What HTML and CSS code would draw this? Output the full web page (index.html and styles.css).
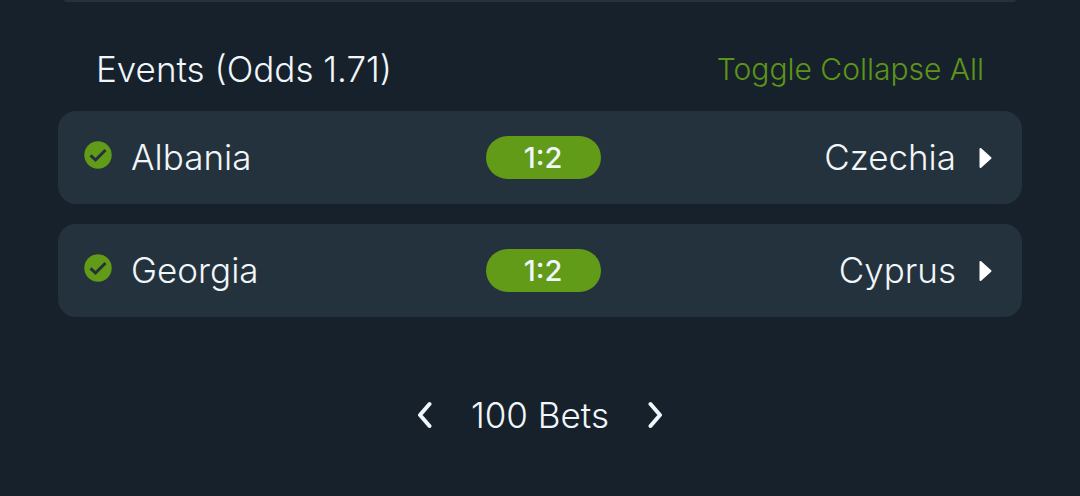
FILE: index.html
```html
<!DOCTYPE html>
<html lang="en">
<head>
    <meta charset="UTF-8">
    <meta name="viewport" content="width=device-width, initial-scale=1.0">
    <title>Bets</title>
    <link rel="stylesheet" href="styles.css">
</head>
<body>

<div class="previous-card"></div>

<main class="container">
    <header class="events-header">
        <h2>Events (Odds 1.71)</h2>
        <button type="button" class="toggle-all">Toggle Collapse All</button>
    </header>

    <div class="events">
        <button type="button" class="event">
            <span class="home">
                <svg class="check" viewBox="0 0 28 28" aria-hidden="true">
                    <circle cx="14" cy="14" r="13.700"/>
                    <path d="M6.500 14.300l5 4.700L21.500 9"/>
                </svg>
                Albania
            </span>
            <span class="score">1:2</span>
            <span class="away">
                Czechia
                <svg class="caret" viewBox="0 0 13 22" aria-hidden="true">
                    <path d="M1.500 2v18L11.500 11z"/>
                </svg>
            </span>
        </button>

        <button type="button" class="event">
            <span class="home">
                <svg class="check" viewBox="0 0 28 28" aria-hidden="true">
                    <circle cx="14" cy="14" r="13.700"/>
                    <path d="M6.500 14.300l5 4.700L21.500 9"/>
                </svg>
                Georgia
            </span>
            <span class="score">1:2</span>
            <span class="away">
                Cyprus
                <svg class="caret" viewBox="0 0 13 22" aria-hidden="true">
                    <path d="M1.500 2v18L11.500 11z"/>
                </svg>
            </span>
        </button>
    </div>

    <nav class="pager">
        <button type="button" aria-label="Previous bets">
            <svg viewBox="0 0 16 28" aria-hidden="true"><path d="M13.500 3L4 14l9.500 11"/></svg>
        </button>
        <span>100 Bets</span>
        <button type="button" aria-label="Next bets">
            <svg viewBox="0 0 16 28" aria-hidden="true"><path d="M2.500 3L12 14 2.500 25"/></svg>
        </button>
    </nav>
</main>

</body>
</html>
```

FILE: styles.css
```css
body {
    font-family: Inter, sans-serif;
    font-weight: 300;
    background-color: #17212C;
    color: #F1F6FA;
    margin: 0;
}

button {
    font: inherit;
    color: inherit;
    background: none;
    border: none;
    padding: 0;
    cursor: pointer;
}

.previous-card {
    height: 2px;
    margin: 0 64px;
    background-color: #24323D;
    border-radius: 0 0 12px 12px;
}

.container {
    margin: 0 58px;
}

.events-header {
    display: flex;
    justify-content: space-between;
    align-items: center;
    padding: 45px 38px 20px;
}

.events-header h2 {
    margin: 0;
    font-size: 35px;
    font-weight: 300;
    line-height: 44px;
}

.toggle-all {
    color: #5C9419;
    font-size: 30px;
    line-height: 44px;
}

.events {
    display: flex;
    flex-direction: column;
    gap: 20px;
}

.event {
    display: grid;
    grid-template-columns: 1fr auto 1fr;
    align-items: center;
    width: 100%;
    padding: 24px 30px 24px 26px;
    border-radius: 18px;
    background-color: #24323D;
    font-size: 35px;
    line-height: 45px;
}

.home,
.away {
    display: flex;
    align-items: center;
    gap: 19px;
}

.away {
    justify-content: flex-end;
    gap: 23px;
}

.check {
    width: 28px;
    height: 28px;
    margin-bottom: 6px;
}

.check circle {
    fill: #619B17;
}

.check path {
    fill: none;
    stroke: #24323D;
    stroke-width: 3;
}

.score {
    width: 115px;
    margin-left: 10px;
    border-radius: 22px;
    background-color: #619B17;
    font-size: 29px;
    font-weight: 500;
    line-height: 43px;
    text-align: center;
}

.caret {
    width: 13px;
    height: 22px;
    fill: #FFFFFF;
    stroke: #FFFFFF;
    stroke-width: 2;
    stroke-linejoin: round;
}

.pager {
    display: flex;
    justify-content: center;
    align-items: center;
    gap: 39px;
    padding: 76px 0 57px;
    font-size: 35px;
    line-height: 44px;
}

.pager button {
    display: flex;
}

.pager svg {
    width: 16px;
    height: 28px;
    fill: none;
    stroke: #F1F6FA;
    stroke-width: 4;
    stroke-linecap: round;
    stroke-linejoin: round;
}
```
